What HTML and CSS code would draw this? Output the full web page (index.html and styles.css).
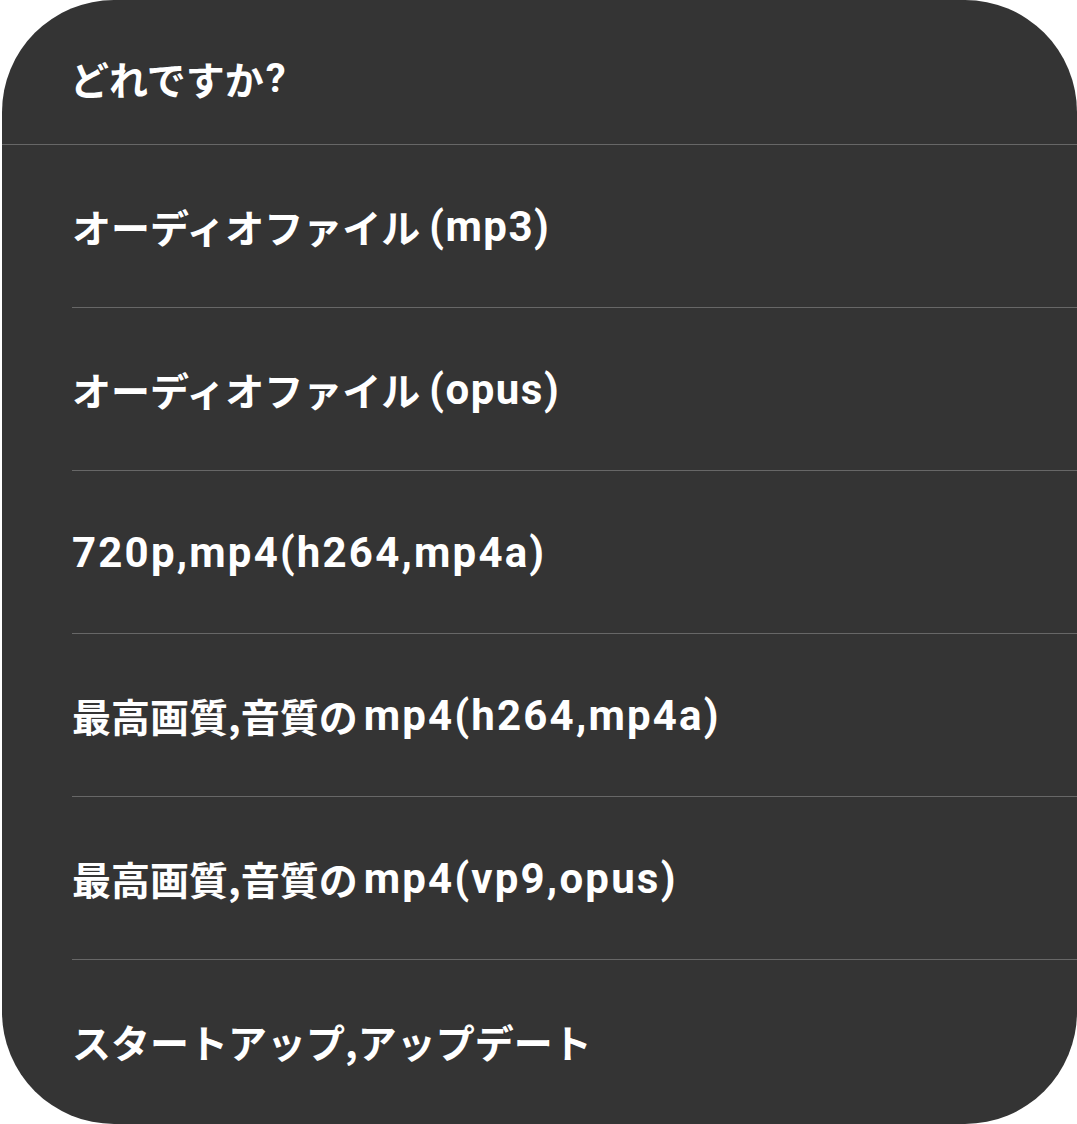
FILE: index.html
```html
<!DOCTYPE html>
<html lang="ja">
<head>
<meta charset="utf-8">
<link rel="stylesheet" href="styles.css">
</head>
<body>
<div class="sheet">
  <div class="title">どれですか<span class="lat">?</span></div>
  <div class="list">
    <div class="item">オーディオファイル<span class="lat gap">(mp3)</span></div>
    <div class="item">オーディオファイル<span class="lat gap">(opus)</span></div>
    <div class="item"><span class="lat wide">720p,mp4(h264,mp4a)</span></div>
    <div class="item">最高画質,音質の<span class="lat wide after">mp4(h264,mp4a)</span></div>
    <div class="item">最高画質,音質の<span class="lat wide after">mp4(vp9,opus)</span></div>
    <div class="item">スタートアップ,アップデート</div>
  </div>
</div>
</body>
</html>
```
FILE: styles.css
```css
html, body {
  margin: 0;
  padding: 0;
  background: #ffffff;
}
body {
  width: 1077px;
  height: 1124px;
  overflow: hidden;
  font-family: "Noto Sans CJK JP", "Noto Sans", sans-serif;
  color: #ffffff;
}
.sheet {
  margin-left: 2px;
  width: 1075px;
  height: 1124px;
  background: #343434;
  border-radius: 112px;
  overflow: hidden;
  display: flex;
  flex-direction: column;
}
.title {
  height: 145px;
  box-sizing: border-box;
  padding-left: 68px;
  padding-top: 12px;
  display: flex;
  align-items: center;
  font-size: 39px;
  font-weight: 700;
  border-bottom: 1px solid #676767;
}
.list {
  display: flex;
  flex-direction: column;
}
.item {
  margin-left: 70px;
  height: 162px;
  display: flex;
  align-items: center;
  font-size: 39px;
  font-weight: 700;
  white-space: nowrap;
}
.item + .item {
  border-top: 1px solid #676767;
}
.lat {
  font-family: "Roboto", "Liberation Sans", sans-serif;
  font-size: 42px;
  font-weight: 700;
  letter-spacing: 0.5px;
}
.title .lat {
  font-size: 40px;
  margin-left: 2px;
}
.lat.gap {
  margin-left: 9px;
  letter-spacing: 1.5px;
}
.lat.wide {
  letter-spacing: 2.2px;
}
.lat.after {
  margin-left: 6px;
}
```
